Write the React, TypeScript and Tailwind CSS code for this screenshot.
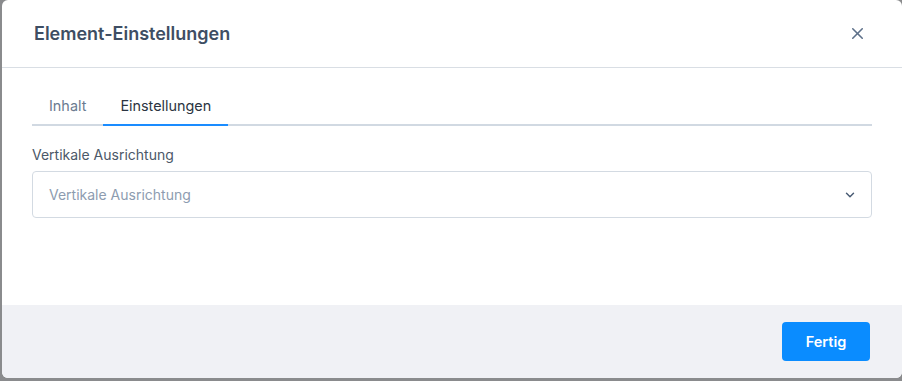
import { ChevronDown, X } from 'lucide-react'

const tabs = ['Inhalt', 'Einstellungen']

export default function App() {
  const active = 'Einstellungen'

  return (
    <div className="w-[902px] h-[381px] bg-[#8a8b8d] pl-[2px] pb-[3px] overflow-hidden font-['Inter',sans-serif]">
      <div className="h-full bg-white rounded-md flex flex-col overflow-hidden">
        {/* header */}
        <div className="h-[68px] shrink-0 border-b border-[#d9dee4] flex items-center justify-between pl-[32px] pr-[35px]">
          <h2 className="text-[18px] font-semibold text-[#3e4e63]">Element-Einstellungen</h2>
          <button className="text-[#5d7089]">
            <X className="w-[19px] h-[19px]" strokeWidth={2} />
          </button>
        </div>

        {/* body */}
        <div className="flex-1 px-[30px] pt-[27px]">
          <div className="flex border-b-2 border-[#d1d9e2]">
            {tabs.map((t) => (
              <button
                key={t}
                className={
                  t === active
                    ? 'px-[17px] pb-[7px] -mb-[2px] border-b-2 border-[#1a8cff] text-[14.4px] leading-[22px] text-[#2b3441]'
                    : 'px-[17px] pb-[7px] -mb-[2px] border-b-2 border-transparent text-[14.4px] leading-[22px] text-[#6b7b90]'
                }
              >
                {t}
              </button>
            ))}
          </div>

          <label className="block mt-[19px] mb-[6px] text-[14px] leading-[20px] text-[#4b5868]">
            Vertikale Ausrichtung
          </label>
          <div className="h-[47px] border border-[#d3dae2] rounded-[4px] flex items-center justify-between pl-[16px] pr-[14px]">
            <span className="text-[14px] text-[#8d9cb0]">Vertikale Ausrichtung</span>
            <ChevronDown className="w-[14px] h-[14px] text-[#4b5d75]" strokeWidth={2.5} />
          </div>
        </div>

        {/* footer */}
        <div className="h-[73px] shrink-0 bg-[#f0f1f5] flex items-center justify-end pr-[32px]">
          <button className="w-[88px] h-[39px] rounded-[4px] bg-[#0a8cff] text-white text-[14.5px] font-semibold">
            Fertig
          </button>
        </div>
      </div>
    </div>
  )
}
